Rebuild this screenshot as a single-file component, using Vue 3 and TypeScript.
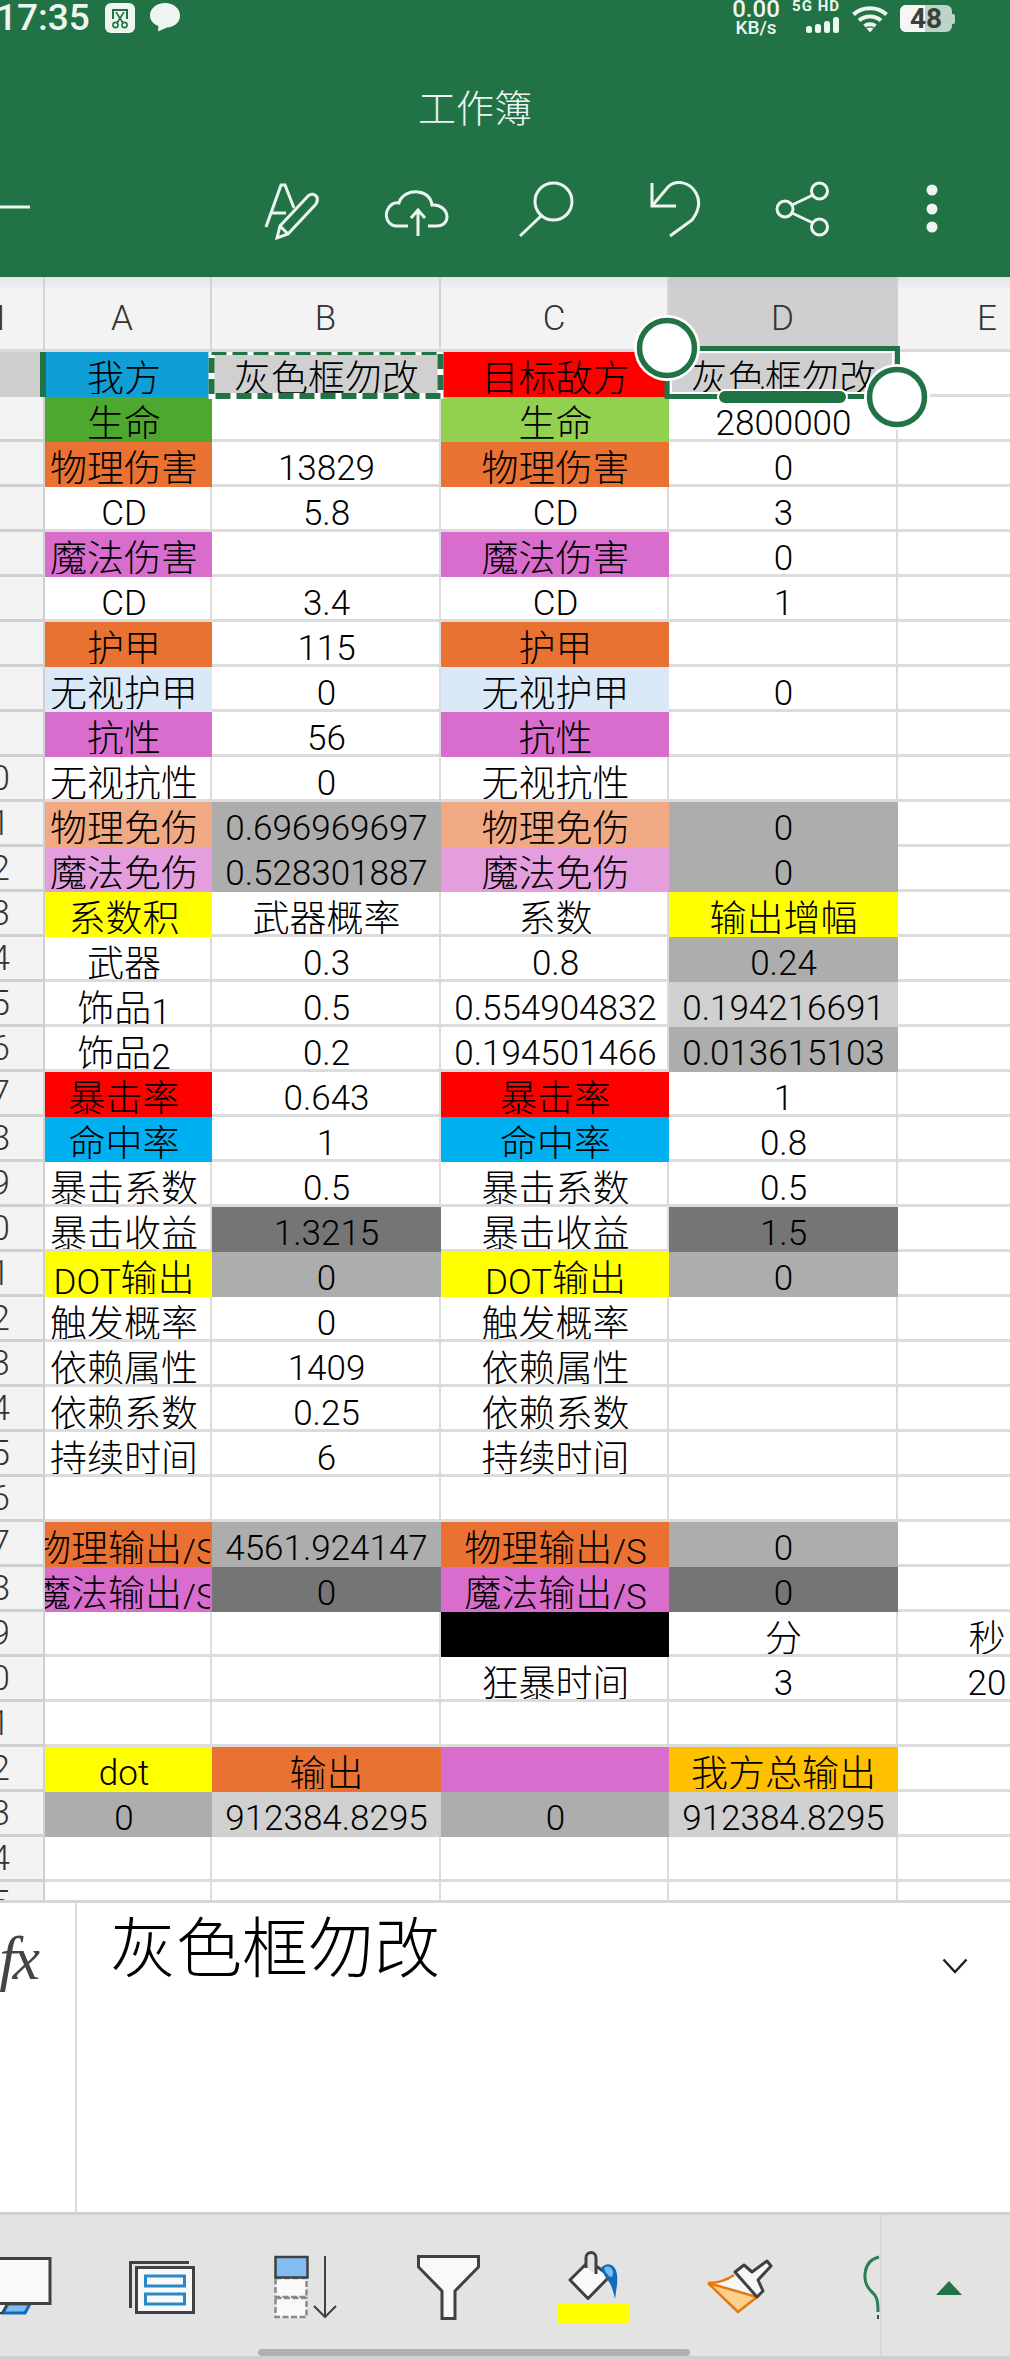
<script setup lang="ts">
type Cell = { t?: string; c?: string };
const O = 'orange', M = 'mag', A = 'g1', L = 'g2', D = 'g3', Y = 'yellow', R = 'red', S = 'sky';
const c = (t = '', cls = ''): Cell => ({ t, c: cls });
const e = c();
const data: Cell[][] = [
  [c('我方', 'blue'), c('灰色框勿改', L), c('目标敌方', R), c('灰色框勿改', L)],
  [c('生命', 'green'), e, c('生命', 'lime'), c('2800000')],
  [c('物理伤害', O), c('13829'), c('物理伤害', O), c('0')],
  [c('CD'), c('5.8'), c('CD'), c('3')],
  [c('魔法伤害', M), e, c('魔法伤害', M), c('0')],
  [c('CD'), c('3.4'), c('CD'), c('1')],
  [c('护甲', O), c('115'), c('护甲', O), e],
  [c('无视护甲', 'pale'), c('0'), c('无视护甲', 'pale'), c('0')],
  [c('抗性', M), c('56'), c('抗性', M), e],
  [c('无视抗性'), c('0'), c('无视抗性'), e],
  [c('物理免伤', 'lorange'), c('0.696969697', A), c('物理免伤', 'lorange'), c('0', A)],
  [c('魔法免伤', 'lmag'), c('0.528301887', A), c('魔法免伤', 'lmag'), c('0', A)],
  [c('系数积', Y), c('武器概率'), c('系数'), c('输出增幅', Y)],
  [c('武器'), c('0.3'), c('0.8'), c('0.24', A)],
  [c('饰品1'), c('0.5'), c('0.554904832'), c('0.194216691', L)],
  [c('饰品2'), c('0.2'), c('0.194501466'), c('0.013615103', A)],
  [c('暴击率', R), c('0.643'), c('暴击率', R), c('1')],
  [c('命中率', S), c('1'), c('命中率', S), c('0.8')],
  [c('暴击系数'), c('0.5'), c('暴击系数'), c('0.5')],
  [c('暴击收益'), c('1.3215', D), c('暴击收益'), c('1.5', D)],
  [c('DOT输出', Y), c('0', A), c('DOT输出', Y), c('0', A)],
  [c('触发概率'), c('0'), c('触发概率'), e],
  [c('依赖属性'), c('1409'), c('依赖属性'), e],
  [c('依赖系数'), c('0.25'), c('依赖系数'), e],
  [c('持续时间'), c('6'), c('持续时间'), e],
  [e, e, e, e],
  [c('物理输出/S', O), c('4561.924147', A), c('物理输出/S', O), c('0', A)],
  [c('魔法输出/S', M), c('0', D), c('魔法输出/S', M), c('0', D)],
  [e, e, c('', 'black'), c('分'), c('秒')],
  [e, e, c('狂暴时间'), c('3'), c('20')],
  [e, e, e, e],
  [c('dot', Y), c('输出', O), c('', M), c('我方总输出', 'gold')],
  [c('0', A), c('912384.8295', L), c('0', A), c('912384.8295', L)],
  [e, e, e, e],
  [e, e, e, e],
];
const rows = data.map((r, i) => {
  const cells = [...r];
  while (cells.length < 5) cells.push(e);
  return { n: i >= 9 ? String(i + 1) : '', cells };
});
const cols = ['A', 'B', 'C', 'D', 'E'];
const parts = (t = '') =>
  t.split(/([\x00-\x7f]+)/).filter(Boolean).map((s) => ({ s, lat: /^[\x00-\x7f]/.test(s) }));
</script>

<template>
  <div class="screen">
    <header class="top">
      <div class="status">
        <span class="clock">17:35</span>
        <svg class="st-scissors" viewBox="0 0 30 30" width="30" height="30">
          <rect width="30" height="30" rx="6" fill="#eef5f1" />
          <path d="M8 16V7H22V16" fill="none" stroke="#217346" stroke-width="2" />
          <path d="M11 9L18 20M19 9L12 20" fill="none" stroke="#217346" stroke-width="1.6" />
          <circle cx="10.500" cy="22" r="2.600" fill="none" stroke="#217346" stroke-width="1.600" />
          <circle cx="19.500" cy="22" r="2.600" fill="none" stroke="#217346" stroke-width="1.600" />
        </svg>
        <svg class="st-bubble" viewBox="0 0 30 30" width="30" height="30">
          <path d="M15 1C23.500 1 30 6.500 30 13.500C30 21 23.500 25 17 25.500L8 29.500L8.500 24C3 22 0 18 0 13.500C0 6.500 6.500 1 15 1Z" fill="#eef5f1" />
        </svg>
        <div class="speed"><span class="sp1">0.00</span><span class="sp2">KB/s</span></div>
        <div class="net">
          <span class="hd">5G HD</span>
          <svg viewBox="0 0 34 17" width="34" height="17">
            <rect x="0" y="9" width="6" height="7" rx="2.500" fill="#eef5f1" />
            <rect x="9" y="7" width="6" height="9" rx="2.500" fill="#eef5f1" />
            <rect x="18" y="4" width="6" height="12" rx="2.500" fill="#eef5f1" />
            <rect x="27" y="0" width="6" height="16" rx="2.500" fill="#eef5f1" />
          </svg>
        </div>
        <svg class="wifi" viewBox="0 0 36 28" width="36" height="28">
          <g fill="none" stroke="#eef5f1" stroke-width="4">
            <path d="M1.500 9.500C10 1 26 1 34.500 9.500" />
            <path d="M7 15.500C13 10 23 10 29 15.500" />
            <path d="M12.500 21C15.500 18.500 20.500 18.500 23.500 21" />
          </g>
          <path d="M14.500 23.500C16.500 22.200 19.500 22.200 21.500 23.500L18 27.500Z" fill="#eef5f1" />
        </svg>
        <div class="battery">
          <div class="batt-body"><span class="batt-fill"></span><span class="batt-num">48</span></div>
          <span class="batt-nub"></span>
        </div>
      </div>
      <div class="title">工作簿</div>
      <div class="actions">
        <svg class="a-minus" viewBox="0 180 30 60" width="30" height="60"><path d="M0 206H30" /></svg>
        <svg class="a-font" viewBox="262 180 60 60" width="60" height="60">
          <path d="M266 226L281 184H285L294 207M270 212H286" />
          <path d="M277 237L280 225L308 195Q313 191 317 196Q318 200 316 203L288 233ZM280 225L288 233" />
        </svg>
        <svg class="a-cloud" viewBox="382 180 68 60" width="68" height="60">
          <path d="M408 225H397C388 225 385 216 387 210C389 204 394 201 399 202C401 194 410 190 418 191C426 192 431 197 432 204C440 203 447 209 447 216C447 222 442 225 437 225H428" />
          <path d="M418 235V209M411 217L418 209L425 217" />
        </svg>
        <svg class="a-search" viewBox="516 180 60 60" width="60" height="60">
          <circle cx="553.500" cy="200.500" r="18.500" />
          <path d="M541 215L520 235" />
        </svg>
        <svg class="a-undo" viewBox="648 180 54 60" width="54" height="60">
          <path d="M652 182V205H676" />
          <path d="M652 205L668 186C676 178 690 181 696 192C701 201 698 211 692 219L670 235" />
        </svg>
        <svg class="a-share" viewBox="775 180 55 60" width="55" height="60">
          <circle cx="819.500" cy="190" r="8" />
          <circle cx="785" cy="208" r="8" />
          <circle cx="819.500" cy="226" r="8" />
          <path d="M792 204L813 194M792 212L813 222" />
        </svg>
        <svg class="a-more" viewBox="920 180 25 60" width="25" height="60">
          <circle class="solid" cx="932" cy="189" r="5.500" />
          <circle class="solid" cx="932" cy="208" r="5.500" />
          <circle class="solid" cx="932" cy="226" r="5.500" />
        </svg>
      </div>
    </header>

    <section class="sheet">
      <div class="grid">
        <div class="ch corner"><span>H</span></div>
        <div v-for="(h, i) in cols" :key="h" class="ch" :class="{ active: i === 3, wide: i === 0, tail: i === 4 }">
          <span>{{ h }}</span>
        </div>
        <template v-for="(r, ri) in rows" :key="ri">
          <div class="rh" :class="{ active: ri === 0 }">{{ r.n }}</div>
          <div v-for="(cell, ci) in r.cells" :key="ci" class="cell" :class="[cell.c, 'col' + ci]">
            <span class="txt"><template v-for="(p, pi) in parts(cell.t)" :key="pi"><span :class="p.lat ? 'lat' : 'cjk'">{{ p.s }}</span></template></span>
          </div>
        </template>
      </div>
      <svg class="selection" viewBox="0 277 1010 170" width="1010" height="170">
        <defs>
          <clipPath id="antsClip"><rect x="200" y="352" width="250" height="60" /></clipPath>
        </defs>
        <rect x="40" y="352" width="6" height="45" fill="#217346" />
        <g clip-path="url(#antsClip)" fill="none" stroke-width="6">
          <rect x="211.500" y="352" width="229" height="44" stroke="#fff" />
          <rect x="211.500" y="352" width="229" height="44" stroke="#217346" stroke-dasharray="15 6" />
        </g>
        <rect x="671" y="352" width="222" height="41" fill="none" stroke="#fff" stroke-width="2" />
        <rect x="667" y="348.500" width="230.500" height="48" fill="none" stroke="#217346" stroke-width="5" />
        <rect x="718" y="390" width="129" height="14" rx="7" fill="#217346" stroke="#fff" stroke-width="2" />
        <circle cx="667" cy="348" r="33" fill="#fff" />
        <circle cx="667" cy="348" r="27.500" fill="#fff" stroke="#217346" stroke-width="5.500" />
        <circle cx="897" cy="397" r="33" fill="#fff" />
        <circle cx="897" cy="397" r="27.500" fill="#fff" stroke="#217346" stroke-width="5.500" />
      </svg>
    </section>

    <section class="formula">
      <div class="fx"><span>fx</span></div>
      <div class="ftext">灰色框勿改</div>
      <svg class="chev" viewBox="0 0 26 16" width="26" height="16">
        <path d="M1.500 1.500L13 14L24.500 1.500" fill="none" stroke="#222" stroke-width="2.500" />
      </svg>
    </section>

    <footer class="toolbar">
      <div class="tools">
        <svg class="t1" viewBox="0 2248 60 80" width="60" height="80">
          <path d="M8 2304H30L25 2313H3Z" fill="#80bbee" stroke="#0f6cbd" stroke-width="3" />
          <path d="M-2 2304H7L2 2313H-2Z" fill="#f9f9f9" stroke="#404040" stroke-width="2" />
          <rect x="-5" y="2258.500" width="55" height="45" fill="#f9f9f9" stroke="#404040" stroke-width="3" />
        </svg>
        <svg class="t2" viewBox="125 2248 75 80" width="75" height="80">
          <path d="M130.500 2308V2262.500H189" fill="none" stroke="#404040" stroke-width="3" />
          <rect x="136.500" y="2267.500" width="57" height="45" fill="#f9f9f9" stroke="#404040" stroke-width="3" />
          <rect x="145.500" y="2276" width="39" height="10" fill="none" stroke="#2a88c8" stroke-width="3" />
          <rect x="145.500" y="2294" width="39" height="10" fill="none" stroke="#2a88c8" stroke-width="3" />
        </svg>
        <svg class="t3" viewBox="270 2248 70 80" width="70" height="80">
          <rect x="275.500" y="2278" width="31" height="19" fill="#f9f9f9" stroke="#8a8a8a" stroke-width="2.500" stroke-dasharray="6 2.500" />
          <rect x="275.500" y="2298" width="31" height="19" fill="#f9f9f9" stroke="#8a8a8a" stroke-width="2.500" stroke-dasharray="6 2.500" />
          <rect x="275.500" y="2257" width="32" height="20.500" fill="#83bcf0" stroke="#404040" stroke-width="2.500" />
          <path d="M325 2256V2316M314 2306L325 2317L336 2306" fill="none" stroke="#404040" stroke-width="2" />
        </svg>
        <svg class="t4" viewBox="412 2248 73 80" width="73" height="80">
          <path d="M418.500 2256.500H478.500V2267L455 2291V2318.500H442V2291L418.500 2267Z" fill="#f9f9f9" stroke="#404040" stroke-width="3" />
        </svg>
        <svg class="t5" viewBox="555 2248 80 80" width="80" height="80">
          <path d="M586 2264L570 2280L588 2298.500L610 2276L596 2266Z" fill="#f9f9f9" stroke="#404040" stroke-width="3" stroke-linejoin="round" />
          <path d="M586 2268V2257.500A5 5 0 0 1 596 2257.500V2274" fill="#e3e3e3" stroke="#404040" stroke-width="3" />
          <path d="M601 2268C607 2261 616 2264 617 2275C618 2283 616 2291 615 2299C613 2290 611 2283 606 2278C604 2275 602 2271 601 2268Z" fill="#0f6cbd" />
          <path d="M604 2268C608 2265 613 2267 613 2273C613 2277 611 2278 609 2276C607 2274 605 2271 604 2268Z" fill="#7ab8ee" />
          <rect x="558" y="2304" width="72" height="19" fill="#ffff00" />
        </svg>
        <svg class="t6" viewBox="700 2248 75 80" width="75" height="80">
          <path d="M708 2283C718 2283 727 2280 734 2275L757 2297L738 2312Z" fill="#f7f7f7" />
          <path d="M708 2283L757 2297L738 2312Z" fill="#fdd08f" />
          <path d="M708 2283C718 2283 727 2280 734 2275M708 2283L738 2312L757 2297L708 2283" fill="none" stroke="#e27a11" stroke-width="2.500" stroke-linejoin="round" />
          <path d="M735 2272L744 2265L752 2272L767 2261L771 2266L758 2280L763 2291L757 2297Z" fill="#f7f7f7" stroke="#404040" stroke-width="3" stroke-linejoin="round" />
        </svg>
        <svg class="t7" viewBox="860 2248 20 80" width="20" height="80">
          <path d="M879 2257C862 2261 862 2282 871 2291C877 2296 878 2300 878 2312" fill="none" stroke="#2f7d57" stroke-width="3" />
          <path d="M878 2315V2319" stroke="#444" stroke-width="2" />
        </svg>
      </div>
      <div class="panel">
        <svg viewBox="0 0 26 14" width="26" height="14"><path d="M13 0L26 14H0Z" fill="#217346" /></svg>
      </div>
      <span class="hscroll"></span>
    </footer>
  </div>
</template>

<style>
html, body { margin: 0; background: #fff; }
</style>

<style scoped>
.screen {
  width: 1010px;
  height: 2359px;
  overflow: hidden;
  display: flex;
  flex-direction: column;
  font-family: "Roboto", "Noto Sans CJK SC", sans-serif;
  color: #000;
  background: #fff;
}
.top { height: 277px; flex: none; background: #217346; color: #eef5f1; overflow: hidden; }
.status { height: 40px; display: flex; align-items: flex-start; position: relative; }
.clock { font-size: 37px; font-weight: 500; line-height: 36px; margin-left: -4px; width: 109px; }
.st-scissors { margin-top: 3px; }
.st-bubble { margin: 2px 0 0 15px; }
.speed { display: flex; flex-direction: column; align-items: center; width: 50px; margin-left: 551px; font-weight: 500; }
.sp1 { font-size: 24px; line-height: 18px; }
.sp2 { font-size: 19px; line-height: 20px; }
.net { display: flex; flex-direction: column; align-items: flex-end; width: 48px; margin-left: 11px; }
.hd { font-size: 15px; font-weight: 700; line-height: 13px; letter-spacing: 1px; white-space: nowrap; }
.net svg { margin-top: 4px; }
.wifi { margin: 5px 0 0 12px; }
.battery { display: flex; align-items: center; margin: 5px 0 0 12px; }
.batt-body { position: relative; width: 52px; height: 27px; border-radius: 6px; overflow: hidden; background: #bcd3c6; text-align: center; }
.batt-fill { position: absolute; left: 0; top: 0; bottom: 0; width: 25px; background: #f4f7f5; }
.batt-num { position: relative; font-size: 28px; font-weight: 700; line-height: 27px; color: #3a3f3c; }
.batt-nub { width: 3px; height: 10px; background: #bcd3c6; border-radius: 0 2px 2px 0; }
.title { width: 950px; margin-top: 49px; text-align: center; font-size: 38px; line-height: 40px; font-weight: 300; }
.actions { display: flex; margin-top: 52px; }
.actions svg { flex: none; fill: none; stroke: #eef5f1; stroke-width: 3; }
.actions svg .solid { fill: #eef5f1; stroke: none; }
.a-font { margin-left: 232px; }
.a-cloud { margin-left: 60px; }
.a-search { margin-left: 66px; }
.a-undo { margin-left: 72px; }
.a-share { margin-left: 73px; }
.a-more { margin-left: 90px; }

.sheet { position: relative; height: 1623px; flex: none; overflow: hidden; }
.grid {
  display: grid;
  grid-template-columns: 45px 167px 229px 228px 229px 112px;
  grid-template-rows: 75px;
  grid-auto-rows: 45px;
}
.ch {
  box-sizing: border-box;
  background: linear-gradient(#e4e4e4, #f3f3f3 14px);
  border-right: 2px solid #d4d4d4;
  border-bottom: 3px solid #d9d9d9;
  display: flex;
  align-items: center;
  justify-content: center;
  font-size: 35px;
  font-weight: 300;
  color: #333;
  overflow: hidden;
  padding-top: 11px;
}
.ch.wide span { margin-left: -11px; }
.ch.tail { justify-content: flex-start; border-right: 0; }
.ch.tail span { width: 178px; text-align: center; flex: none; }
.ch.active { background: linear-gradient(#cacaca, #cfcfcf 14px); border-right-color: #cfcfcf; }
.corner { justify-content: flex-end; padding-right: 38px; }
.rh {
  box-sizing: border-box;
  background: #f3f3f3;
  border-right: 2px solid #d0d0d0;
  border-bottom: 3px solid #d0d0d0;
  display: flex;
  justify-content: flex-end;
  padding-right: 33px;
  font-size: 35px;
  font-weight: 300;
  line-height: 44px;
  color: #333;
  overflow: hidden;
  white-space: nowrap;
}
.rh.active { background: #cfcfcf; border-color: #cfcfcf; }
.cell {
  box-sizing: border-box;
  border-right: 2px solid #dcdcdc;
  border-bottom: 3px solid #dcdcdc;
  background: #fff;
  overflow: hidden;
  white-space: nowrap;
  font-size: 36px;
  font-weight: 300;
  line-height: 42px;
  text-align: center;
}
.txt { display: block; width: 229px; height: 45px; position: relative; top: 1px; }
.col0 .txt { width: 180px; margin-left: -11px; }
.col4 .txt { width: 178px; }
.col4 { border-right: 0; }
.lat { font-size: 35px; position: relative; top: 4px; }
.cjk { font-family: "Noto Sans CJK SC", sans-serif; font-size: 37px; position: relative; top: 2px; }
.blue { background: #0f9ed5; border-color: #0f9ed5; }
.green { background: #4ea72e; border-color: #4ea72e; }
.lime { background: #92d050; border-color: #92d050; }
.orange { background: #e97132; border-color: #e97132; }
.lorange { background: #f1a983; border-color: #f1a983; }
.mag { background: #d86dcd; border-color: #d86dcd; }
.lmag { background: #e49edd; border-color: #e49edd; }
.pale { background: #dae9f8; border-color: #dae9f8; }
.g1 { background: #adadad; border-color: #adadad; }
.g2 { background: #d0d0d0; border-color: #d0d0d0; }
.g3 { background: #757575; border-color: #757575; }
.yellow { background: #ffff00; border-color: #ffff00; }
.red { background: #ff0000; border-color: #ff0000; }
.sky { background: #00b0f0; border-color: #00b0f0; }
.gold { background: #ffc000; border-color: #ffc000; }
.black { background: #000; border-color: #000; }
.selection { position: absolute; left: 0; top: 0; pointer-events: none; }

.formula {
  position: relative;
  box-sizing: border-box;
  height: 315px;
  flex: none;
  border-top: 3px solid #d6d6d6;
  border-bottom: 3px solid #d0d0d0;
  display: flex;
  background: #fff;
}
.fx {
  width: 77px;
  flex: none;
  box-sizing: border-box;
  border-right: 2px solid #dcdcdc;
  overflow: hidden;
  display: flex;
  justify-content: flex-end;
}
.fx span {
  font-family: "Liberation Serif", serif;
  font-style: italic;
  font-size: 62px;
  line-height: 70px;
  margin-top: 20px;
  margin-right: 39px;
  color: #444;
  letter-spacing: -4px;
}
.ftext {
  margin: 1px 0 0 33px;
  font-family: "Noto Sans CJK SC", sans-serif;
  font-size: 66px;
  line-height: 78px;
  font-weight: 300;
  color: #000;
  white-space: nowrap;
}
.chev { position: absolute; left: 942px; top: 55px; }

.toolbar {
  position: relative;
  flex: 1;
  display: flex;
  box-sizing: border-box;
  background: #e3e3e3;
  border-bottom: 3px solid #d0d0d0;
}
.tools { width: 880px; flex: none; display: flex; padding-top: 33px; box-sizing: border-box; }
.tools svg { flex: none; overflow: hidden; }
.t2 { margin-left: 65px; }
.t3 { margin-left: 70px; }
.t4 { margin-left: 72px; }
.t5 { margin-left: 70px; }
.t6 { margin-left: 65px; }
.t7 { margin-left: 85px; }
.panel {
  flex: 1;
  box-sizing: border-box;
  border-left: 2px solid #d8d8d8;
  padding: 66px 0 0 54px;
}
.panel svg { display: block; }
.hscroll {
  position: absolute;
  left: 258px;
  width: 432px;
  bottom: 0;
  height: 7px;
  border-radius: 4px;
  background: #b0b0b0;
}
</style>
